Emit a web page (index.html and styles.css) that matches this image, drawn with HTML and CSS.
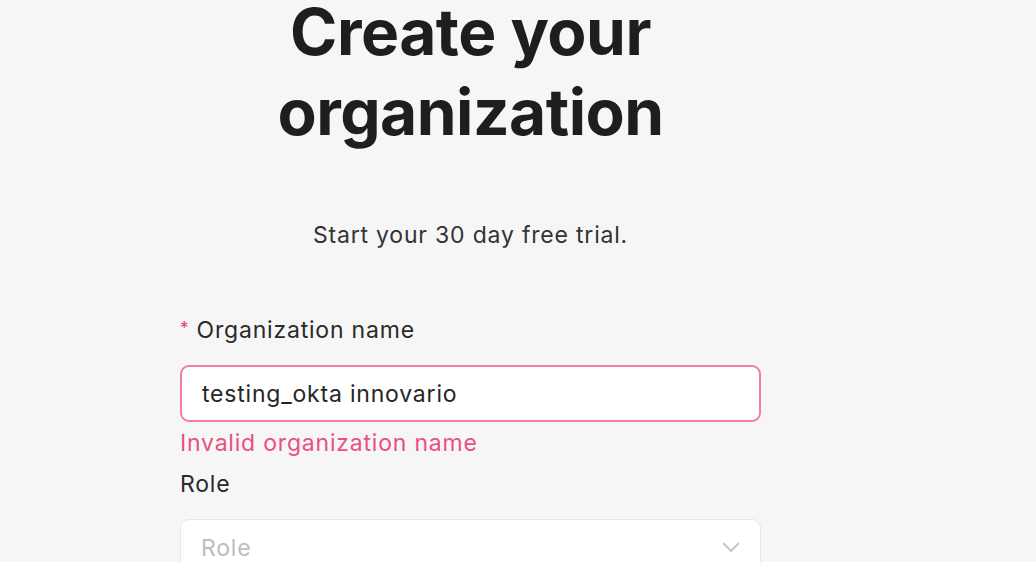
FILE: index.html
```html
<!DOCTYPE html>
<html lang="en">
<head>
<meta charset="utf-8">
<title>Create your organization</title>
<link rel="stylesheet" href="styles.css">
</head>
<body>
<main class="page">
  <section class="card">
    <h1 class="title"><span class="title-line">Create your</span> <span class="title-line second">organization</span></h1>
    <p class="subtitle">Start your 30 day free trial.</p>
    <form class="form">
      <div class="field">
        <label class="label"><span class="req">*</span> Organization name</label>
        <div class="input input-error">testing_okta innovario</div>
        <div class="error">Invalid organization name</div>
      </div>
      <div class="field">
        <label class="label">Role</label>
        <div class="input select">
          <span class="placeholder">Role</span>
          <svg class="chev" width="18" height="11" viewBox="0 0 18 11"><path d="M1 1 L9 9 L17 1" fill="none" stroke="#c4c4c4" stroke-width="1.8"/></svg>
        </div>
      </div>
    </form>
  </section>
</main>
</body>
</html>
```
FILE: styles.css
```css
html, body {
  margin: 0;
  padding: 0;
}
body {
  background: #f6f6f6;
  font-family: Inter, "Liberation Sans", Arial, sans-serif;
  color: #1f1f1f;
  overflow: hidden;
}
.page {
  width: 581px;
  margin-left: 180px;
}
.card {
  display: flex;
  flex-direction: column;
}
.title {
  margin: 0;
  font-size: 64px;
  font-weight: 700;
  text-align: center;
  letter-spacing: -0.5px;
  color: #1e1e1e;
}
.title-line {
  display: block;
  line-height: 64px;
}
.title-line.second {
  margin-top: 16px;
}
.subtitle {
  margin: 76px 0 0 0;
  font-size: 23px;
  line-height: 30px;
  letter-spacing: 0.8px;
  text-align: center;
  color: #333;
}
.form {
  margin-top: 63px;
  display: flex;
  flex-direction: column;
}
.field {
  display: flex;
  flex-direction: column;
}
.label {
  font-size: 23px;
  line-height: 30px;
  letter-spacing: 0.8px;
  color: #2a2a2a;
  margin-bottom: 20px;
}
.req {
  color: #e8406c;
  font-size: 17px;
  vertical-align: 4px;
}
.input {
  box-sizing: border-box;
  height: 57px;
  background: #ffffff;
  border: 1.5px solid #e6e6e6;
  border-radius: 9px;
  padding: 0 20px;
  display: flex;
  align-items: center;
  font-size: 23px;
  letter-spacing: 0.8px;
  color: #262626;
}
.input-error {
  border: 2px solid #f27ea3;
}
.error {
  font-size: 23px;
  line-height: 30px;
  letter-spacing: 0.8px;
  color: #ec4f7f;
  margin-top: 6px;
  margin-bottom: 11px;
}
.select {
  justify-content: space-between;
}
.placeholder {
  color: #bdbdbd;
}
```
